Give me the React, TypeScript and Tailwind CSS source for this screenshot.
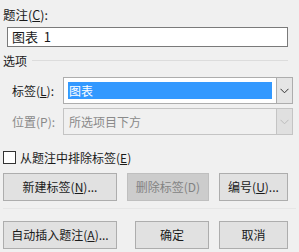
import React from "react";

const FONT = { fontFamily: '"Noto Sans CJK SC", "Noto Sans", sans-serif' };

function Key({ k }: { k: string }) {
  return <span className="underline underline-offset-[1px] decoration-1">{k}</span>;
}

function Chevron({ color }: { color: string }) {
  return (
    <svg width="9" height="6" viewBox="0 0 9 6" fill="none">
      <path d="M0.5 0.8 L4.5 4.8 L8.5 0.8" stroke={color} strokeWidth="1" />
    </svg>
  );
}

function Btn({
  children,
  w,
  disabled,
}: {
  children: React.ReactNode;
  w: string;
  disabled?: boolean;
}) {
  return (
    <div
      className={`${w} h-[28px] flex items-center justify-center border text-[12px] ${
        disabled
          ? "bg-[#cccccc] border-[#bfbfbf] text-[#838383]"
          : "bg-[#e1e1e1] border-[#adadad] text-[#1a1a1a]"
      }`}
    >
      {children}
    </div>
  );
}

export default function App() {
  return (
    <div
      className="w-[299px] h-[252px] bg-[#f0f0f0] text-[#1a1a1a] text-[12px] leading-[14px] overflow-hidden"
      style={FONT}
    >
      {/* 题注 */}
      <div className="pl-[3px] pt-[8px] h-[22px] text-[12.5px]">
        题注(<Key k="C" />):
      </div>
      <div className="ml-[7px] mt-[5px] w-[281px] h-[20px] bg-white border border-[#7a7a7a] flex items-center pl-[4px] text-[13px]">
        图表&nbsp;&nbsp;1
      </div>

      {/* 选项 */}
      <div className="flex items-center mt-[7px] h-[14px] pl-[3px] pr-[11px]">
        <span>选项</span>
        <div className="flex-1 ml-[5px] h-px bg-[#dcdcdc] mt-[-2px]" />
      </div>

      {/* 标签 */}
      <div className="flex items-center mt-[9px] h-[27px] pl-[12px]">
        <span className="w-[51px]">
          标签(<Key k="L" />):
        </span>
        <div className="flex h-full">
          <div className="w-[214px] h-full bg-white border border-[#adadad] p-[4px]">
            <div className="h-full bg-[#3399ff] text-white flex items-center pl-[1px] text-[12px]">
              图表
            </div>
          </div>
          <div className="w-[16px] h-full bg-[#e5e5e5] border border-l-0 border-[#adadad] flex items-center justify-center">
            <Chevron color="#333" />
          </div>
        </div>
      </div>

      {/* 位置 */}
      <div className="flex items-center mt-[4px] h-[27px] pl-[12px] text-[#8a8a8a]">
        <span className="w-[51px]">位置(P):</span>
        <div className="flex h-full">
          <div className="w-[214px] h-full bg-[#f0f0f0] border border-[#c4c4c4] flex items-center pl-[5px]">
            所选项目下方
          </div>
          <div className="w-[16px] h-full bg-[#e0e0e0] border border-l-0 border-[#c4c4c4] flex items-center justify-center">
            <Chevron color="#bcbcbc" />
          </div>
        </div>
      </div>

      {/* 复选框 */}
      <div className="flex items-center mt-[16px] h-[13px] pl-[3px]">
        <div className="w-[13px] h-[13px] bg-white border border-[#333]" />
        <span className="ml-[4px]">
          从题注中排除标签(<Key k="E" />)
        </span>
      </div>

      {/* 按钮 */}
      <div className="flex mt-[9px] pl-[3px]">
        <Btn w="w-[114px]">
          新建标签(<Key k="N" />)...
        </Btn>
        <div className="ml-[10px]">
          <Btn w="w-[82px]" disabled>
            删除标签(D)
          </Btn>
        </div>
        <div className="ml-[10px]">
          <Btn w="w-[69px]">
            编号(<Key k="U" />)...
          </Btn>
        </div>
      </div>

      <div className="mt-[7px] mx-[3px] h-px bg-[#e6e6e6]" />

      <div className="flex mt-[12px] pl-[3px]">
        <Btn w="w-[114px]">
          自动插入题注(<Key k="A" />)...
        </Btn>
        <div className="ml-[18px]">
          <Btn w="w-[74px]">确定</Btn>
        </div>
        <div className="ml-[10px]">
          <Btn w="w-[69px]">取消</Btn>
        </div>
      </div>
    </div>
  );
}
